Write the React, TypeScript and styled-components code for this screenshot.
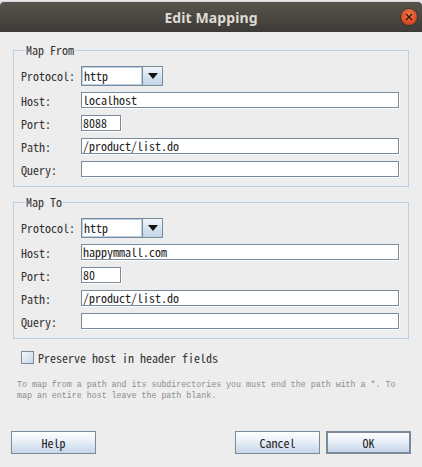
import React from 'react';
import styled, { createGlobalStyle } from 'styled-components';

const uiFont = `"Noto Sans Mono CJK JP", "Noto Sans CJK JP", "DejaVu Sans Mono", monospace`;

const GlobalStyle = createGlobalStyle`
  html, body {
    margin: 0;
    padding: 0;
    background: #ededed;
  }
  body {
    width: 422px;
    height: 467px;
    overflow: hidden;
  }
`;

const Window = styled.div`
  width: 422px;
  height: 467px;
  display: flex;
  flex-direction: column;
  background: #ededed;
  font-family: ${uiFont};
  font-size: 12px;
  color: #333;
`;

const BehindStrip = styled.div`
  height: 2px;
  background: linear-gradient(#f4f4f4, #cfcfcf);
`;

const TitleBar = styled.div`
  height: 30px;
  display: grid;
  grid-template-columns: 1fr auto 1fr;
  align-items: center;
  background: linear-gradient(#58544d, #3c3b37);
  border-radius: 4px 4px 0 0;
`;

const Title = styled.div`
  grid-column: 2;
  font-family: "Noto Sans", "DejaVu Sans", sans-serif;
  font-weight: bold;
  font-size: 14px;
  color: #dfdbd2;
  letter-spacing: 0.1px;
`;

const CloseButton = styled.div`
  justify-self: end;
  margin-right: 5px;
  width: 16px;
  height: 16px;
  border-radius: 50%;
  background: radial-gradient(circle at 50% 35%, #f27a4c, #d9481c 70%, #b83a14);
  box-shadow: 0 0 0 1px rgba(0, 0, 0, 0.25);
  display: flex;
  align-items: center;
  justify-content: center;
`;

const Body = styled.div`
  flex: 1;
  display: flex;
  flex-direction: column;
  padding: 11px 13px 0 13px;
`;

const Group = styled.fieldset<{ $gap?: number }>`
  margin: ${(p) => p.$gap ?? 0}px 0 0 0;
  padding: 9px 9px 8px 7px;
  border: 1px solid #b8cfe5;
  min-width: 0;
`;

const Legend = styled.legend`
  margin-left: 4px;
  padding: 0 1px;
  font-size: 12px;
  line-height: 14px;
  color: #333;
`;

const Form = styled.div`
  display: grid;
  grid-template-columns: 60px 1fr;
  grid-template-rows: 20px repeat(4, 17px);
  row-gap: 6px;
  align-items: start;
`;

const Label = styled.div`
  align-self: center;
  line-height: 16px;
  white-space: nowrap;
`;

const Field = styled.div<{ $width?: number }>`
  height: 16px;
  box-sizing: border-box;
  width: ${(p) => (p.$width ? `${p.$width}px` : '100%')};
  background: #fff;
  border: 1px solid #7a8a99;
  box-shadow: 1px 1px 0 #fff;
  padding: 0 1px;
  line-height: 14px;
  color: #222;
  white-space: nowrap;
  overflow: hidden;
`;

const Combo = styled.div`
  width: 82px;
  height: 20px;
  box-sizing: border-box;
  display: flex;
  border: 1px solid #7a8a99;
  background: #fff;
`;

const ComboText = styled.div`
  flex: 1;
  border: 1px solid #b8cfe5;
  line-height: 16px;
  padding-left: 1px;
  color: #222;
`;

const ComboArrow = styled.div`
  width: 19px;
  border-left: 1px solid #7a8a99;
  background: linear-gradient(#f3f7fb, #d4e2ef 55%, #c2d5e8);
  display: flex;
  align-items: center;
  justify-content: center;
`;

const CheckRow = styled.div`
  margin: 10px 0 0 8px;
  display: flex;
  align-items: center;
  gap: 4px;
  font-size: 12px;
`;

const CheckBox = styled.div`
  width: 13px;
  height: 13px;
  box-sizing: border-box;
  border: 1px solid #7a8a99;
  background: linear-gradient(135deg, #f4f8fc, #c6d7e8);
`;

const Hint = styled.div`
  margin: 13px 0 0 4px;
  font-family: "Liberation Mono", "DejaVu Sans Mono", monospace;
  font-size: 8.3px;
  line-height: 11px;
  color: #8c8c8c;
`;

const ButtonBar = styled.div`
  margin-top: 30px;
  margin-left: -2px;
  margin-right: -2px;
  display: flex;
  align-items: center;
  gap: 6px;
`;

const Spacer = styled.div`
  flex: 1;
`;

const Button = styled.div<{ $default?: boolean }>`
  width: 85px;
  height: 23px;
  box-sizing: border-box;
  display: flex;
  align-items: center;
  justify-content: center;
  border: ${(p) => (p.$default ? 2 : 1)}px solid #7a8a99;
  background: linear-gradient(#ffffff, #eaf1f8 40%, #c5d7ea);
  color: #222;
  font-size: 12px;
`;

type RowProps = { protocol: string; host: string; port: string; path: string };

const MappingGroup = ({ title, gap, data }: { title: string; gap?: number; data: RowProps }) => (
  <Group $gap={gap}>
    <Legend>{title}</Legend>
    <Form>
      <Label>Protocol:</Label>
      <Combo>
        <ComboText>{data.protocol}</ComboText>
        <ComboArrow>
          <svg width="10" height="6" viewBox="0 0 10 6">
            <path d="M0 0 H10 L5 6 Z" fill="#111" />
          </svg>
        </ComboArrow>
      </Combo>
      <Label>Host:</Label>
      <Field>{data.host}</Field>
      <Label>Port:</Label>
      <Field $width={40}>{data.port}</Field>
      <Label>Path:</Label>
      <Field>{data.path}</Field>
      <Label>Query:</Label>
      <Field />
    </Form>
  </Group>
);

const App = () => (
  <Window>
    <GlobalStyle />
    <BehindStrip />
    <TitleBar>
      <Title>Edit Mapping</Title>
      <CloseButton>
        <svg width="8" height="8" viewBox="0 0 8 8">
          <path d="M1 1 L7 7 M7 1 L1 7" stroke="#3b1a0e" strokeWidth="1.4" />
        </svg>
      </CloseButton>
    </TitleBar>
    <Body>
      <MappingGroup
        title="Map From"
        data={{ protocol: 'http', host: 'localhost', port: '8088', path: '/product/list.do' }}
      />
      <MappingGroup
        title="Map To"
        gap={8}
        data={{ protocol: 'http', host: 'happymmall.com', port: '80', path: '/product/list.do' }}
      />
      <CheckRow>
        <CheckBox />
        <span>Preserve host in header fields</span>
      </CheckRow>
      <Hint>
        To map from a path and its subdirectories you must end the path with a *. To
        <br />
        map an entire host leave the path blank.
      </Hint>
      <ButtonBar>
        <Button>Help</Button>
        <Spacer />
        <Button>Cancel</Button>
        <Button $default>OK</Button>
      </ButtonBar>
    </Body>
  </Window>
);

export default App;
